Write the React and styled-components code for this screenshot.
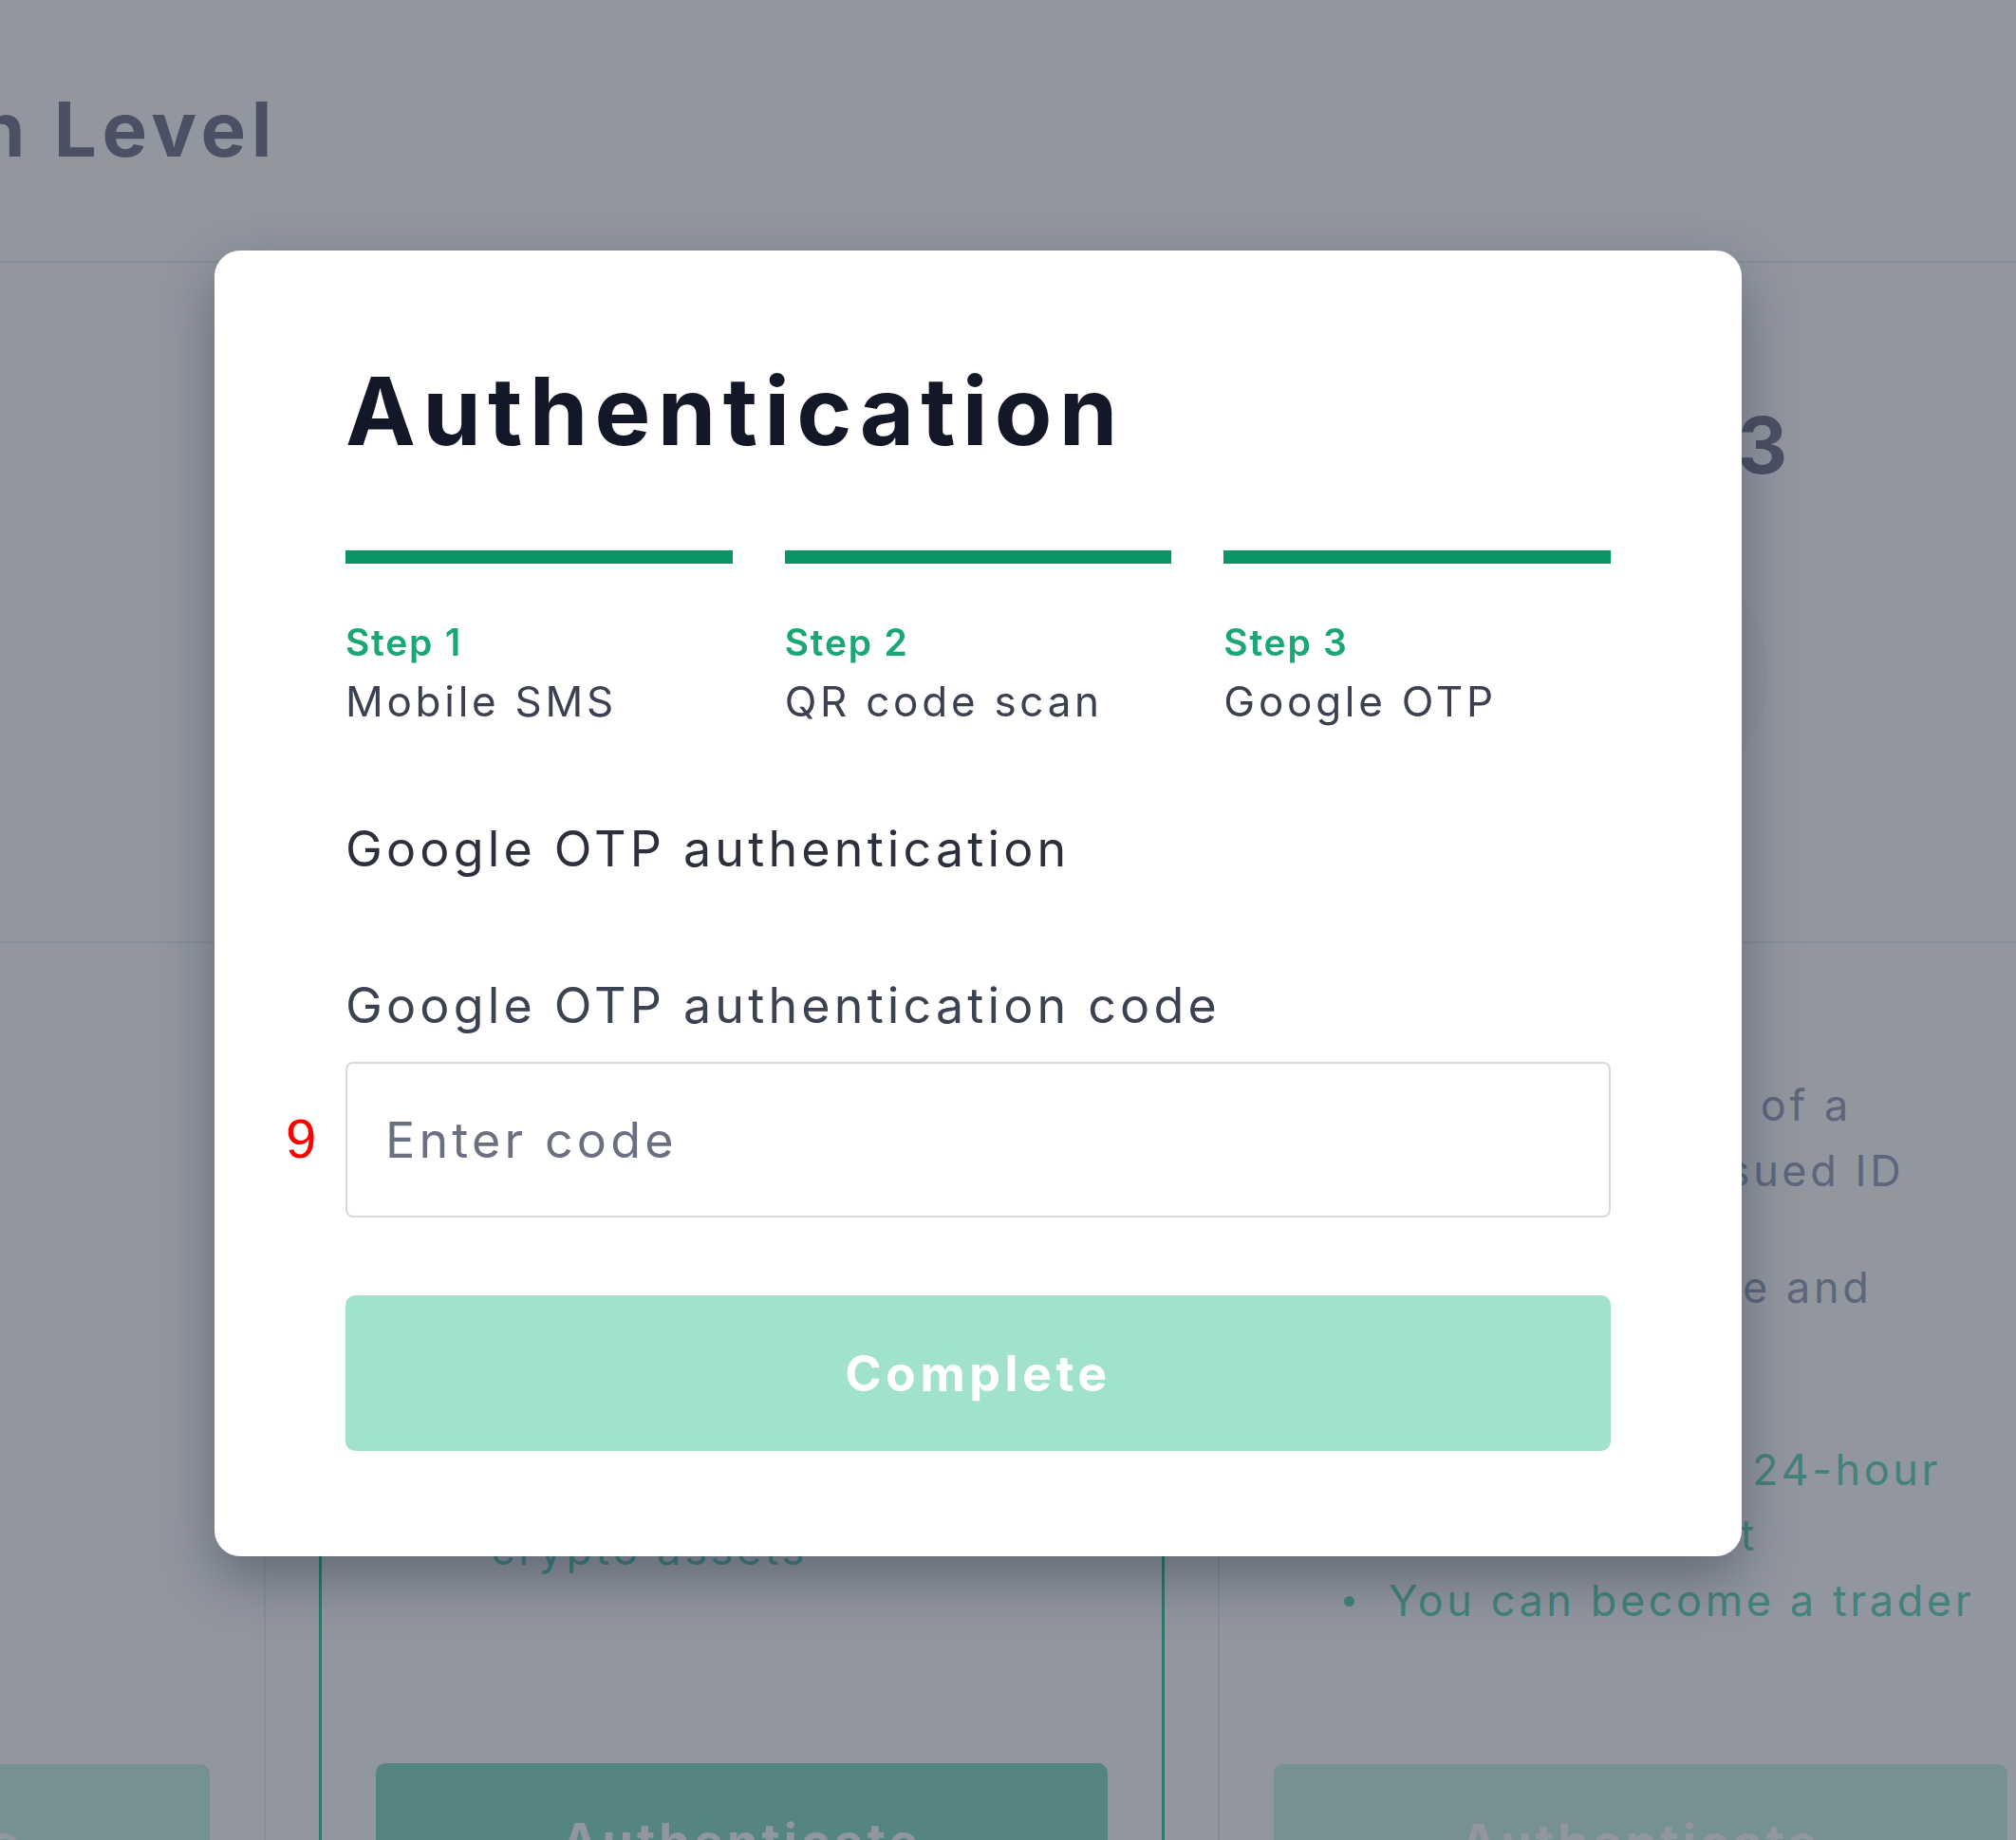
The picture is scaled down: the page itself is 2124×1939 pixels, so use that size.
import React from "react";
import styled, { createGlobalStyle } from "styled-components";

const GlobalStyle = createGlobalStyle`
  html, body { margin: 0; padding: 0; }
  body {
    font-family: Inter, "Noto Sans", sans-serif;
    background: #ffffff;
  }
  #root { width: 2124px; height: 1939px; overflow: hidden; position: relative; }
`;

/* ---------- page behind the dialog ---------- */

const Page = styled.div`
  width: 2124px;
  height: 1939px;
  overflow: hidden;
  background: #ffffff;
`;

const Header = styled.header`
  height: 277px;
  box-sizing: border-box;
  padding-top: 96px;
  border-bottom: 2px solid #eceef1;
`;

const HeaderClip = styled.div`
  width: 292px;
  display: flex;
  justify-content: flex-end;
  overflow: hidden;
`;

const PageTitle = styled.h1`
  margin: 0;
  font-size: 80px;
  line-height: 1;
  font-weight: 700;
  letter-spacing: 0.07em;
  color: #76798d;
  white-space: nowrap;
`;

const LevelRow = styled.div`
  display: flex;
  gap: 56px;
  margin-left: -611px;
`;

const LevelCard = styled.section`
  flex: 0 0 891px;
  height: 1805px;
  box-sizing: border-box;
  display: flex;
  flex-direction: column;
  border: ${p => (p.$active ? "3px solid #3cc49b" : "2px solid #eceef1")};
  border-top: none;
  padding-bottom: 57px;
`;

const CardHead = styled.div`
  height: 717px;
  box-sizing: border-box;
  padding-top: 152px;
  border-bottom: 2px solid #eceef1;
  display: flex;
  flex-direction: column;
  align-items: center;
`;

const LevelName = styled.h3`
  margin: 0;
  font-size: 82px;
  line-height: 1;
  font-weight: 700;
  letter-spacing: 0.06em;
  color: #76798d;
  white-space: nowrap;
`;

const LevelBadge = styled.div`
  width: 268px;
  height: 268px;
  margin-top: 66px;
  border-radius: 50%;
  background: #f7f8f9;
`;

const CardBody = styled.div`
  padding: 136px 0 0 131px;
`;

const Bullets = styled.ul`
  margin: ${p => (p.$benefit ? "54px 0 0" : "0")};
  padding: 0;
  list-style: none;
  display: flex;
  flex-direction: column;
  gap: ${p => (p.$benefit ? "0" : "54px")};
`;

const Bullet = styled.li`
  position: relative;
  padding-left: 47px;
  font-size: 45px;
  line-height: 69px;
  letter-spacing: 0.08em;
  white-space: nowrap;
  color: ${p => (p.$benefit ? "#66d8b8" : "#9aa3bb")};

  &::before {
    content: "";
    position: absolute;
    left: 0;
    top: 30px;
    width: 11px;
    height: 11px;
    border-radius: 50%;
    background: currentColor;
  }
`;

const AuthButton = styled.button`
  margin: auto 57px 0;
  height: 164px;
  flex: 0 0 164px;
  border: none;
  border-radius: 10px;
  background: ${p => (p.$active ? "#8addc2" : "#cdf3e6")};
  color: #ffffff;
  font-family: inherit;
  font-size: 52px;
  font-weight: 700;
  letter-spacing: 0.08em;
`;

/* ---------- dialog ---------- */

const Backdrop = styled.div`
  position: fixed;
  inset: 0;
  background: rgba(30, 41, 59, 0.49);
  padding: 264px 0 0 226px;
`;

const Modal = styled.div`
  position: relative;
  width: 1609px;
  box-sizing: border-box;
  padding: 120px 138px 111px;
  background: #ffffff;
  border-radius: 27px;
  box-shadow: 0 24px 60px rgba(15, 23, 42, 0.35);
`;

const Title = styled.h2`
  margin: 0;
  font-size: 99px;
  line-height: 1;
  font-weight: 700;
  letter-spacing: 0.073em;
  color: #121827;
`;

const Steps = styled.div`
  margin-top: 97px;
  display: grid;
  grid-template-columns: repeat(3, 1fr);
  column-gap: 55px;
`;

const Step = styled.div`
  display: flex;
  flex-direction: column;
`;

const StepBar = styled.div`
  height: 14px;
  background: ${p => (p.$done ? "#0a9467" : "#e5e7eb")};
`;

const StepLabel = styled.div`
  margin-top: 63px;
  font-size: 39px;
  line-height: 1;
  font-weight: 600;
  letter-spacing: 0.045em;
  color: #1aa774;
`;

const StepName = styled.div`
  margin-top: 21px;
  font-size: 44px;
  line-height: 1;
  letter-spacing: 0.085em;
  color: #3b4150;
`;

const SectionTitle = styled.div`
  margin-top: 108px;
  font-size: 52px;
  line-height: 1;
  letter-spacing: 0.08em;
  color: #2b303c;
`;

const FieldLabel = styled.label`
  display: block;
  margin-top: 113px;
  font-size: 52px;
  line-height: 1;
  letter-spacing: 0.08em;
  color: #3b4352;
`;

const Field = styled.div`
  position: relative;
  margin-top: 33px;
`;

const CodeInput = styled.input`
  display: block;
  width: 100%;
  height: 164px;
  box-sizing: border-box;
  padding: 0 40px;
  border: 2px solid #d6d9df;
  border-radius: 8px;
  font-family: inherit;
  font-size: 52px;
  letter-spacing: 0.08em;
  color: #1f2430;
  outline: none;

  &::placeholder { color: #6b7080; }
`;

const Marker = styled.span`
  position: absolute;
  left: -63px;
  top: 52px;
  font-family: "Liberation Sans", Arial, sans-serif;
  font-size: 58px;
  line-height: 1;
  color: #ff0000;
`;

const CompleteButton = styled.button`
  display: block;
  width: 100%;
  margin-top: 82px;
  height: 164px;
  border: none;
  border-radius: 10px;
  background: #a0e2cc;
  color: #ffffff;
  font-family: inherit;
  font-size: 52px;
  font-weight: 700;
  letter-spacing: 0.085em;
`;

const levels = [
  {
    name: "Level 1",
    requirements: [["Sign up"], ["Email check"]],
    benefits: [],
  },
  {
    name: "Level 2",
    active: true,
    requirements: [["Complete mobile SMS", "and Google OTP"]],
    benefits: [
      ["Increase in the 24-hour", "withdrawal limit"],
      ["You can deposit and", "withdraw KRW and", "crypto assets"],
    ],
  },
  {
    name: "Level 3",
    requirements: [
      ["Upload a photo of a", "government-issued ID"],
      ["Enter your name and", "address"],
    ],
    benefits: [["Increase in the 24-hour", "withdrawal limit"], ["You can become a trader"]],
  },
];

const steps = [
  { label: "Step 1", name: "Mobile SMS" },
  { label: "Step 2", name: "QR code scan" },
  { label: "Step 3", name: "Google OTP" },
];

const Lines = ({ lines }) =>
  lines.map((l, i) => (
    <React.Fragment key={i}>
      {i > 0 && <br />}
      {l}
    </React.Fragment>
  ));

export default function App() {
  return (
    <>
      <GlobalStyle />
      <Page>
        <Header>
          <HeaderClip>
            <PageTitle>Authentication Level</PageTitle>
          </HeaderClip>
        </Header>
        <LevelRow>
          {levels.map(level => (
            <LevelCard key={level.name} $active={level.active}>
              <CardHead>
                <LevelName>{level.name}</LevelName>
                <LevelBadge />
              </CardHead>
              <CardBody>
                <Bullets>
                  {level.requirements.map((r, i) => (
                    <Bullet key={i}>
                      <Lines lines={r} />
                    </Bullet>
                  ))}
                </Bullets>
                {level.benefits.length > 0 && (
                  <Bullets $benefit>
                    {level.benefits.map((b, i) => (
                      <Bullet key={i} $benefit>
                        <Lines lines={b} />
                      </Bullet>
                    ))}
                  </Bullets>
                )}
              </CardBody>
              <AuthButton $active={level.active}>Authenticate</AuthButton>
            </LevelCard>
          ))}
        </LevelRow>
      </Page>

      <Backdrop>
        <Modal>
          <Title>Authentication</Title>
          <Steps>
            {steps.map(s => (
              <Step key={s.label}>
                <StepBar $done />
                <StepLabel>{s.label}</StepLabel>
                <StepName>{s.name}</StepName>
              </Step>
            ))}
          </Steps>
          <SectionTitle>Google OTP authentication</SectionTitle>
          <FieldLabel htmlFor="otp">Google OTP authentication code</FieldLabel>
          <Field>
            <Marker>9</Marker>
            <CodeInput id="otp" placeholder="Enter code" />
          </Field>
          <CompleteButton>Complete</CompleteButton>
        </Modal>
      </Backdrop>
    </>
  );
}
